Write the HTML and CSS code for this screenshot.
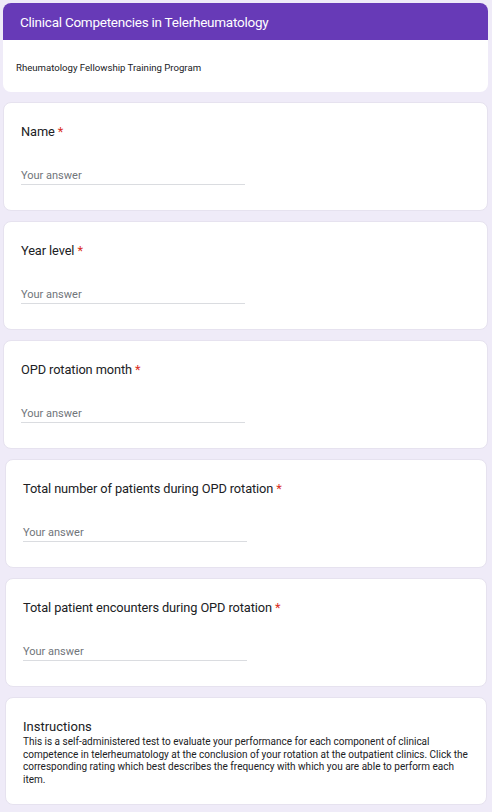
FILE: index.html
```html
<!DOCTYPE html>
<html>
<head>
<meta charset="utf-8">
<link rel="stylesheet" href="styles.css">
</head>
<body>
<div class="page">
  <div class="card header-card">
    <div class="header-bar">Clinical Competencies in Telerheumatology</div>
    <div class="header-desc">Rheumatology Fellowship Training Program</div>
  </div>

  <div class="card question">
    <div class="q-label">Name <span class="req">*</span></div>
    <div class="answer">Your answer</div>
  </div>

  <div class="card question">
    <div class="q-label">Year level <span class="req">*</span></div>
    <div class="answer">Your answer</div>
  </div>

  <div class="card question">
    <div class="q-label">OPD rotation month <span class="req">*</span></div>
    <div class="answer">Your answer</div>
  </div>

  <div class="card question shifted">
    <div class="q-label">Total number of patients during OPD rotation <span class="req">*</span></div>
    <div class="answer">Your answer</div>
  </div>

  <div class="card question shifted">
    <div class="q-label">Total patient encounters during OPD rotation <span class="req">*</span></div>
    <div class="answer">Your answer</div>
  </div>

  <div class="card instructions shifted">
    <div class="ins-title">Instructions</div>
    <div class="ins-body">This is a self-administered test to evaluate your performance for each component of clinical competence in telerheumatology at the conclusion of your rotation at the outpatient clinics. Click the corresponding rating which best describes the frequency with which you are able to perform each item.</div>
  </div>
</div>
</body>
</html>
```

FILE: styles.css
```css
html, body {
  margin: 0;
  padding: 0;
  background: #efebf8;
  font-family: Roboto, "Liberation Sans", Arial, sans-serif;
  color: #202124;
}

.page {
  display: flex;
  flex-direction: column;
  gap: 10px;
  padding: 3px 4px 0 3px;
}

.card {
  background: #ffffff;
  border-radius: 8px;
  border: 1px solid #e6e2ef;
  box-sizing: border-box;
}

.header-card {
  height: 89px;
  overflow: hidden;
  border: none;
}

.header-bar {
  background: #673ab7;
  color: #ffffff;
  height: 37px;
  box-sizing: border-box;
  padding: 0 0 0 17px;
  display: flex;
  align-items: center;
  font-size: 13.5px;
  letter-spacing: -0.25px;
}

.header-desc {
  padding: 21px 0 0 13px;
  font-size: 9.6px;
  line-height: 14px;
  color: #202124;
}

.question {
  height: 109px;
  padding: 19px 0 0 17px;
}

.shifted {
  margin-left: 2px;
  margin-right: 1px;
}

.q-label {
  font-size: 12.8px;
  line-height: 20px;
  letter-spacing: -0.1px;
  color: #202124;
}

.req {
  color: #d93025;
}

.answer {
  margin-top: 26px;
  width: 224px;
  font-size: 11px;
  line-height: 16px;
  color: #70757a;
  border-bottom: 1px solid #dadce0;
}

.instructions {
  height: 108px;
  padding: 19px 10px 0 17px;
}

.ins-title {
  font-size: 13px;
  line-height: 19px;
  color: #202124;
}

.ins-body {
  font-size: 10px;
  line-height: 12.7px;
  color: #202124;
}
```
